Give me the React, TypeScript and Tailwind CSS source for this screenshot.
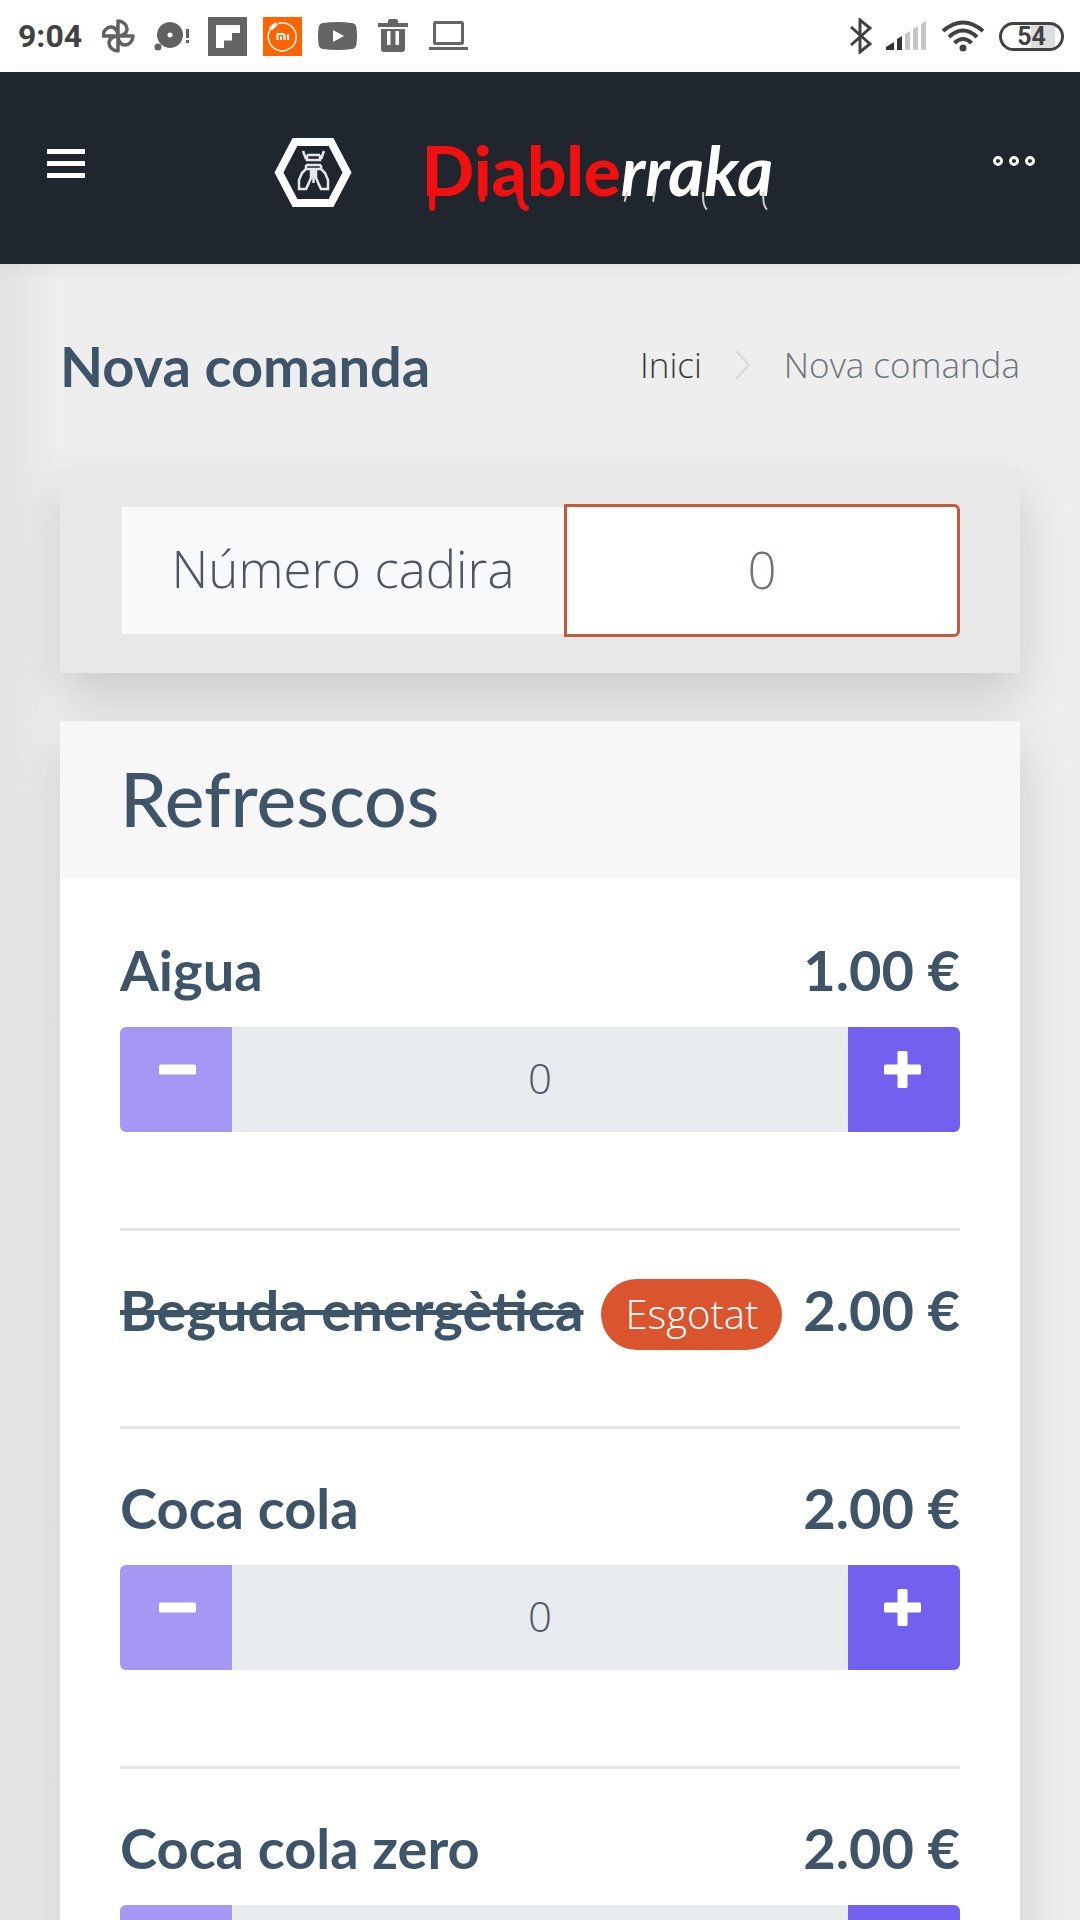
import React from "react";

type Product = { id: string; name: string; price: string; soldOut?: boolean };

const products: Product[] = [
  { id: "aigua", name: "Aigua", price: "1.00 €" },
  { id: "energetica", name: "Beguda energètica", price: "2.00 €", soldOut: true },
  { id: "cola", name: "Coca cola", price: "2.00 €" },
  { id: "cola-zero", name: "Coca cola zero", price: "2.00 €" },
];

function StatusBar() {
  return (
    <div className="flex h-[72px] shrink-0 items-center justify-between bg-white pr-4 pl-[18px] text-[#424242]">
      <div className="flex items-center gap-4">
        <span className="mr-1 font-['Roboto'] text-[32px] leading-[36px] font-bold">9:04</span>
        <svg width="36" height="36" viewBox="0 0 36 36" fill="none" stroke="#616161" strokeWidth="3.500" strokeLinejoin="round">
          <path d="M16 18V3c5 0 9 4 9 8s-4 7-9 7zM16 18h15c0 5-4 9-8 9s-7-4-7-9zM16 18v15c-5 0-9-4-9-8s4-7 9-7zM16 18H1c0-5 4-9 8-9s7 4 7 9z" />
        </svg>
        <svg width="38" height="36" viewBox="0 0 38 36" fill="#616161">
          <path fillRule="evenodd" d="M16 4a13 13 0 1 0 0.010 0zM16 14.500a2.500 2.500 0 1 1-.010 0z" />
          <circle cx="4" cy="29" r="3.500" />
          <rect x="32" y="11" width="3" height="9" />
          <rect x="32" y="22" width="3" height="3" />
        </svg>
        <svg width="39" height="39" viewBox="0 0 39 39">
          <path fill="#646464" d="M0 0h39v39H0z" />
          <path fill="#fff" d="M8 8h24v8h-8v7.500h-8V31H8z" />
        </svg>
        <svg width="39" height="39" viewBox="0 0 39 39">
          <path fill="#ff6400" d="M0 0h39v39H0z" />
          <path d="M15 6.500a14 14 0 1 1-7 5" fill="none" stroke="#fff" strokeWidth="1.500" />
          <path d="M8.500 11l4-3.500" stroke="#fff" strokeWidth="4" strokeLinecap="round" />
          <path d="M14.500 23v-6h5a2 2 0 0 1 2 2v4M18 19.500V23M25 17v6" fill="none" stroke="#fff" strokeWidth="2" />
        </svg>
        <svg width="39" height="28" viewBox="0 0 39 28">
          <path fill="#646464" d="M5 1Q19.500-1 34 1q4 .5 4.500 5 1 8 0 16-.5 4.500-4.500 5-14.500 2-29 0-4-.5-4.500-5-1-8 0-16Q1 1.500 5 1z" />
          <path fill="#fff" d="M15 8l11 6-11 6z" />
        </svg>
        <svg className="ml-1" width="32" height="34" viewBox="0 0 32 34">
          <path fill="#646464" fillRule="evenodd" d="M1 4h10V2q0-2 2-2h6q2 0 2 2v2h10v4H1zM4 10h24v20q0 3-3 3H7q-3 0-3-3zM10 12v14h3.500V12zM18.500 12v14H22V12z" />
        </svg>
        <svg className="ml-1" width="39" height="30" viewBox="0 0 39 30">
          <rect x="5.500" y="1.500" width="28" height="21" rx="1" fill="none" stroke="#646464" strokeWidth="3" />
          <path fill="#646464" d="M0 26h39v3H0z" />
        </svg>
      </div>
      <div className="flex items-center gap-[14px]">
        <svg width="22" height="36" viewBox="0 0 22 36" fill="none" stroke="#424242" strokeWidth="3" strokeLinejoin="miter">
          <path d="M1 9l19 17-10 8V2l10 8L1 27" />
        </svg>
        <svg width="41" height="30" viewBox="0 0 41 30">
          <path fill="#333" d="M0 29v-3l8-5v8zM11 29V18l5-3v14z" />
          <path fill="#c6c6c6" d="M19 29V13l5-3v19zM27 29V8l5-3v24zM35 29V3l5-3v29z" />
        </svg>
        <svg width="44" height="32" viewBox="0 0 44 32" fill="none" stroke="#424242" strokeWidth="4">
          <path d="M2 11Q22-6 42 11M8 17Q22 4 36 17M13.500 23Q22 15 30.500 23" />
          <circle cx="22" cy="28" r="3.500" fill="#424242" stroke="none" />
        </svg>
        <span className="flex h-[29px] w-[65px] items-center justify-center rounded-full border-[3px] border-[#424242] bg-[linear-gradient(90deg,#fff_50%,#dedede_50%,#dedede_90%,#fff_90%)] font-['Roboto'] text-[25px] leading-none font-bold">
          54
        </span>
      </div>
    </div>
  );
}

function BeetleMark() {
  return (
    <svg width="78" height="69" viewBox="0 0 78 69" fill="none" stroke="#fff">
      <path d="M5 34.500L21 4h36l16 30.500L57 65H21z" strokeWidth="8" />
      <g stroke="#e4e8ec" strokeWidth="2.500">
        <path d="M29 13l3 8M50 13l-3 8M33 17h13M33 17v5h13v-5M32 27h15M32 31h15" />
        <path d="M32 27v4l-4 4-3 7v9h7l3-6M47 27v4l4 4 3 7v9h-7l-3-6M37 31v9l-5 11M42 31v9l5 11M39.500 31v14" />
      </g>
    </svg>
  );
}

function Wordmark() {
  return (
    <span className="relative flex items-baseline pb-1 font-['Lato',sans-serif] text-[69px] leading-[84px] font-black">
      <span className="text-[#f01010]">Diable</span>
      <span className="font-bold text-white italic">rraka</span>
      {/* paint drips under the letters */}
      <svg className="absolute bottom-0 left-0 h-[24px] w-full" viewBox="0 0 345 24" preserveAspectRatio="none" fill="none" strokeLinecap="round">
        <path d="M10 0v16M59 0v7M96 0q0 14 6 16" stroke="#f01010" strokeWidth="6" />
        <path d="M201 0l-2 9M228 0l-1 9M276 0q-1 12 3 17M335 0q-1 12 3 17" stroke="#c9ccd0" strokeWidth="2" />
      </svg>
    </span>
  );
}

function TopBar() {
  return (
    <header className="relative z-10 flex h-[192px] shrink-0 items-center bg-[#1f262d] px-[45px] shadow-[0_3px_15px_rgba(0,0,0,0.06)]">
      <button type="button" aria-label="Menú">
        <svg width="42" height="42" viewBox="0 0 42 42" fill="#fff">
          <path d="M2 2h38v5H2zM2 14h38v5H2zM2 26h38v5H2z" />
        </svg>
      </button>
      <a href="#inici" className="flex flex-1 items-center justify-center gap-[70px] pt-2 pr-[33px]">
        <BeetleMark />
        <Wordmark />
      </a>
      <button type="button" aria-label="Opcions" className="pb-2">
        <svg width="42" height="16" viewBox="0 0 42 16" fill="none" stroke="#fff" strokeWidth="3">
          <circle cx="5" cy="5" r="3.500" />
          <circle cx="21" cy="5" r="3.500" />
          <circle cx="37" cy="5" r="3.500" />
        </svg>
      </button>
    </header>
  );
}

function Stepper({ id }: { id: string }) {
  return (
    <div className="mt-4 mb-12 flex h-[105px]">
      <button type="button" disabled aria-label="Treure" className="flex w-28 shrink-0 justify-center rounded-l-md bg-[#a597f3] pt-6 pl-[2px]">
        <svg width="37" height="37" viewBox="0 0 37 37" fill="#fff">
          <rect y="13.500" width="37" height="10" rx="1.500" />
        </svg>
      </button>
      <input
        id={id}
        readOnly
        value="0"
        className="min-w-0 flex-1 bg-[#e8ebee] pb-1 text-center font-['Open_Sans',sans-serif] text-[42px] font-[350] text-[#4f5467] outline-none"
      />
      <button type="button" aria-label="Afegir" className="flex w-28 shrink-0 justify-center rounded-r-md bg-[#7460ee] pt-6 pr-1">
        <svg width="37" height="37" viewBox="0 0 37 37" fill="#fff">
          <rect y="13.500" width="37" height="10" rx="1.500" />
          <rect x="13.500" width="10" height="37" rx="1.500" />
        </svg>
      </button>
    </div>
  );
}

function ProductItem({ product }: { product: Product }) {
  const { id, name, price, soldOut } = product;
  return (
    <li className="border-b-[3px] border-[#e4e4e4] pt-12 pb-12 first:pt-0">
      <div className={soldOut ? "mb-[27px] flex h-[72px] items-start" : "flex h-[72px] items-start"}>
        {soldOut ? (
          <>
            <s className="text-[56px] leading-[62px] font-bold whitespace-nowrap">{name}</s>
            <span className="ml-[18px] rounded-full bg-[#da542e] px-6 pt-px pb-[3px] font-['Open_Sans',sans-serif] text-[40px] leading-[67px] font-[350] text-white">
              Esgotat
            </span>
          </>
        ) : (
          <label htmlFor={id} className="text-[56px] leading-[62px] font-bold">
            {name}
          </label>
        )}
        <span className="ml-auto text-[56px] leading-[62px] font-bold whitespace-nowrap">{price}</span>
      </div>
      {!soldOut && <Stepper id={id} />}
    </li>
  );
}

export default function App() {
  return (
    <div className="flex h-screen flex-col overflow-hidden bg-[#eeeeee] font-['Lato','Open_Sans',sans-serif] text-[#3e5569]">
      <StatusBar />
      <TopBar />
      <main className="flex-1 bg-[linear-gradient(90deg,#e2e2e2,#eeeeee_60px)] px-[60px]">
        <div className="flex h-[204px] items-center justify-between">
          <h1 className="text-[56px] leading-[60px] font-bold">Nova comanda</h1>
          <nav aria-label="Ruta" className="flex items-center gap-[33px] pb-[2px] font-['Open_Sans',sans-serif] text-[35px] leading-[44px] font-[350]">
            <a href="#inici" className="text-[#3a3a3a]">Inici</a>
            <svg width="16" height="30" viewBox="0 0 16 30" fill="none" stroke="#d8dadd" strokeWidth="2.500">
              <path d="M1 1l13 14L1 29" />
            </svg>
            <span className="text-[#6c757d]">Nova comanda</span>
          </nav>
        </div>
        <section className="mb-12 flex items-center bg-[#e8e8e8] px-[60px] py-9 shadow-[0_24px_48px_rgba(0,0,0,0.15)]">
          <label htmlFor="cadira" className="ml-[2px] flex h-[127px] flex-1 items-center justify-center bg-[#f8fafc] pb-1 font-['Open_Sans',sans-serif] text-[51px] font-[350] whitespace-nowrap text-[#4f5467]">
            Número cadira
          </label>
          <input
            id="cadira"
            placeholder="0"
            className="h-[133px] w-[396px] rounded-r-md border-[3px] border-[#c9583a] bg-white pb-1 text-center font-['Open_Sans',sans-serif] text-[51px] font-[350] outline-none placeholder:text-[#6c757d]"
          />
        </section>
        <section className="bg-white shadow-[0_24px_48px_rgba(0,0,0,0.15)]">
          <h2 className="mb-[60px] h-[158px] bg-[#f7f7f7] px-[60px] pt-[34px] text-[75px] leading-[86px] font-medium">Refrescos</h2>
          <ul className="px-[60px]">
            {products.map((p) => (
              <ProductItem key={p.id} product={p} />
            ))}
          </ul>
        </section>
      </main>
    </div>
  );
}
